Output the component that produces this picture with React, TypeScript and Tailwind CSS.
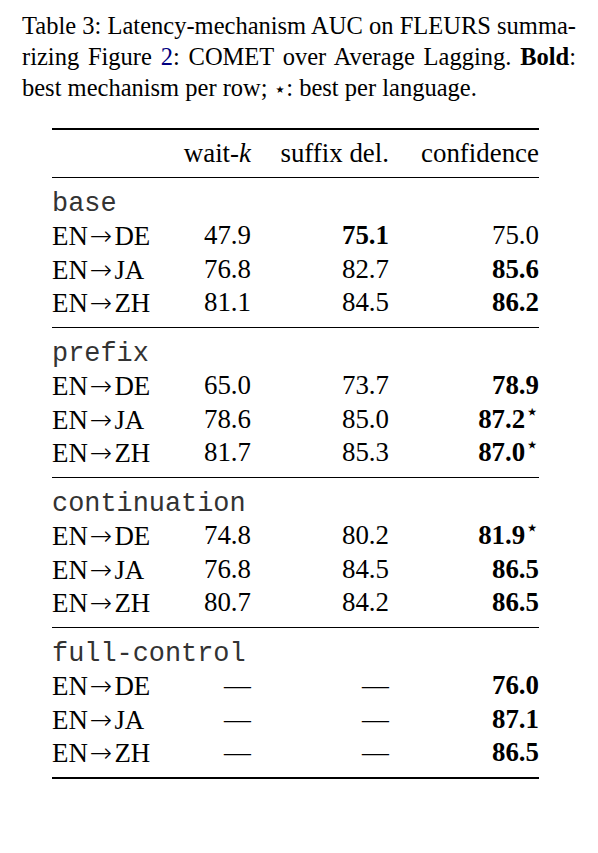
import React from "react";

type Cell = { v: string; b?: boolean; star?: boolean };
type Row = { lang: string; cells: Cell[] };
type Section = { name: string; rows: Row[] };

const sections: Section[] = [
  {
    name: "base",
    rows: [
      { lang: "DE", cells: [{ v: "47.9" }, { v: "75.1", b: true }, { v: "75.0" }] },
      { lang: "JA", cells: [{ v: "76.8" }, { v: "82.7" }, { v: "85.6", b: true }] },
      { lang: "ZH", cells: [{ v: "81.1" }, { v: "84.5" }, { v: "86.2", b: true }] },
    ],
  },
  {
    name: "prefix",
    rows: [
      { lang: "DE", cells: [{ v: "65.0" }, { v: "73.7" }, { v: "78.9", b: true }] },
      { lang: "JA", cells: [{ v: "78.6" }, { v: "85.0" }, { v: "87.2", b: true, star: true }] },
      { lang: "ZH", cells: [{ v: "81.7" }, { v: "85.3" }, { v: "87.0", b: true, star: true }] },
    ],
  },
  {
    name: "continuation",
    rows: [
      { lang: "DE", cells: [{ v: "74.8" }, { v: "80.2" }, { v: "81.9", b: true, star: true }] },
      { lang: "JA", cells: [{ v: "76.8" }, { v: "84.5" }, { v: "86.5", b: true }] },
      { lang: "ZH", cells: [{ v: "80.7" }, { v: "84.2" }, { v: "86.5", b: true }] },
    ],
  },
  {
    name: "full-control",
    rows: [
      { lang: "DE", cells: [{ v: "—" }, { v: "—" }, { v: "76.0", b: true }] },
      { lang: "JA", cells: [{ v: "—" }, { v: "—" }, { v: "87.1", b: true }] },
      { lang: "ZH", cells: [{ v: "—" }, { v: "—" }, { v: "86.5", b: true }] },
    ],
  },
];

const grid = "grid grid-cols-[130px_69px_138px_150px]";

function Star() {
  return (
    <span className="relative -top-[9px] text-[22px] leading-none font-normal font-['DejaVu_Sans',sans-serif]">⋆</span>
  );
}

export default function App() {
  return (
    <div className="w-[598px] h-[853px] bg-white text-black font-['Liberation_Serif',serif]">
      {/* caption */}
      <div className="px-[22px] pt-[10px] text-[24.5px] leading-[31px]">
        <div className="[text-align-last:justify] text-justify">
          Table 3: Latency-mechanism AUC on FLEURS summa-
        </div>
        <div className="[text-align-last:justify] text-justify">
          rizing Figure <span className="text-[#000080]">2</span>: COMET over Average Lagging.{" "}
          <span className="font-bold">Bold</span>:
        </div>
        <div>
          best mechanism per row;{" "}
          <span className="text-[20px] leading-none font-['DejaVu_Sans',sans-serif]">⋆</span>: best per language.
        </div>
      </div>

      {/* table */}
      <div className="ml-[52px] mt-[25px] w-[487px] text-[26.9px]">
        <div className="h-[2px] bg-black" />
        <div className={`${grid} h-[47px] items-center leading-none`}>
          <div />
          <div className="text-right">
            wait-<span className="italic">k</span>
          </div>
          <div className="text-right">suffix del.</div>
          <div className="text-right">confidence</div>
        </div>
        {sections.map((s) => (
          <div key={s.name}>
            <div className="h-px bg-black" />
            <div className="py-2">
              <div className="h-[33.25px] pt-[4px] leading-[29px] font-['Liberation_Mono',monospace] text-[#333]">
                {s.name}
              </div>
              {s.rows.map((r) => (
                <div key={r.lang} className={`${grid} h-[33.25px] leading-[33.25px]`}>
                  <div>
                    EN
                    <span className="mx-[2px] font-extralight font-['DejaVu_Sans',sans-serif]">→</span>
                    {r.lang}
                  </div>
                  {r.cells.map((c, i) => (
                    <div key={i} className={c.b ? "text-right font-bold" : "text-right"}>
                      {c.v}
                      {c.star && <Star />}
                    </div>
                  ))}
                </div>
              ))}
            </div>
          </div>
        ))}
        <div className="h-[2px] bg-black" />
      </div>
    </div>
  );
}
